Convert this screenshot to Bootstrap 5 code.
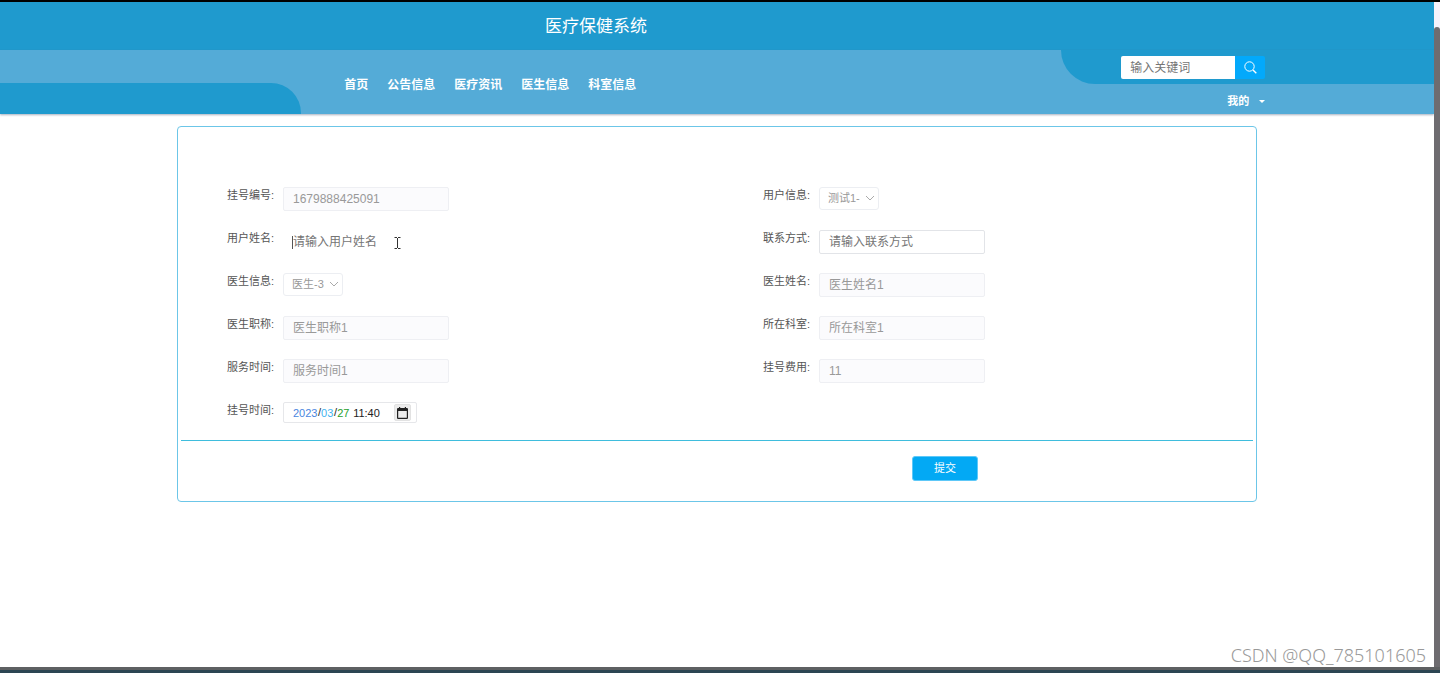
<!DOCTYPE html>
<html lang="zh-CN">
<head>
<meta charset="utf-8">
<meta name="viewport" content="width=device-width, initial-scale=1">
<title>医疗保健系统</title>
<link href="https://cdn.jsdelivr.net/npm/bootstrap@5.3.0/dist/css/bootstrap.min.css" rel="stylesheet">
<style>
  :root { --deep: #1f9ace; --light: #54abd7; --accent: #03a9f4; --line: #6cc6e8; }
  body { font: 12px/17px "Liberation Sans", "Noto Sans CJK SC", sans-serif; color: #555; background: #fff; border-top: 2px solid #000; }
  .site-title { background: var(--deep); height: 48px; padding-left: 38%; font-size: 17px; line-height: 50px; color: #fff; margin: 0; font-weight: 400; }
  .site-bar { background: var(--light); height: 64px; box-shadow: 0 1px 2px rgba(60,80,110,.45); }
  .curve-left { width: 21%; height: 31px; background: var(--deep); border-top-right-radius: 30px; }
  .main-menu { gap: 19px; padding: 6px 0 0 43px; }
  .main-menu a, .my-menu { color: #fff; font-weight: 700; text-decoration: none; }
  .site-side { width: 26%; }
  .curve-right { height: 34px; background: var(--deep); border-bottom-left-radius: 34px; padding: 6px 0 0 60px; }
  .search-box { width: 114px; height: 23px; border: 0; border-radius: 2px 0 0 2px; padding: 0 9px; color: #666; outline: 0; }
  .search-btn { width: 30px; height: 23px; border: 0; padding: 0; background: #03a9fb; border-radius: 0 2px 2px 0; }
  .my-menu { font-size: 11px; border: 0; background: none; padding: 0 0 0 166px; gap: 10px; height: 34px; }
  .my-menu::after { margin: 0; border-width: 3px; border-bottom: 0; }
  .form-panel { max-width: 1080px; margin: 12px auto 0; border: 1px solid var(--line); border-radius: 4px; padding: 60px 3px 20px; }
  .field-row { padding-left: 46px; height: 43px; }
  .field-row label { width: 56px; font-size: 11px; color: #555; }
  .field-box { width: 166px; height: 24px; border: 1px solid #e2e4e8; border-radius: 2px; padding: 0 9px; color: #666; background: #fff; outline: 0; }
  .field-box::placeholder, .search-box::placeholder { color: #757575; opacity: 1; }
  .field-box:disabled { background: #fbfbfd; border-color: #eeeff3; color: #999; }
  .cjk-value { padding-bottom: 3px; }
  .field-box.editing { border-color: transparent; }
  .pick { width: 60px; height: 23px; border: 1px solid #eceef2; border-radius: 3px; padding: 0 18px 0 8px; font-size: 11px; color: #999; opacity: 1; appearance: none; background: #fff; text-overflow: clip; }
  .pick-arrow { right: 4px; top: 7px; pointer-events: none; }
  .caret-bar { left: 9px; top: 6px; width: 1px; height: 13px; background: #555; }
  .beam { left: 110px; top: 6px; }
  .date-box { width: 134px; height: 21px; border: 1px solid #e6e7ea; border-radius: 2px; padding: 0 5px 0 9px; color: #222; font-size: 11px; }
  .date-box input { border: 0; padding: 0; background: none; height: 19px; outline: 0; }
  .w-year { width: 25px; color: #4a86e0; }
  .w-month { width: 13px; color: #42b4f0; }
  .w-day { width: 13px; color: #27a02c; }
  .w-time { width: 30px; margin-left: 3px; color: #222; }
  .date-btn { width: 17px; height: 17px; padding: 0; border: 1px solid #e2e2e2; border-radius: 2px; background: #ececec; }
  .panel-line { border-top: 1px solid #3fbddd; opacity: 1; margin: -5px 0 15px; }
  .submit-row { padding-left: 68.2%; }
  .submit-btn { width: 66px; height: 25px; padding: 0; border: 1px solid #5ec8f8; border-radius: 3px; background: var(--accent); color: #fff; font-size: 11px; }
  .scroll-track { width: 6px; background: #f6f2fb; padding-top: 25px; }
  .scroll-thumb { background: #6e6c70; border-radius: 3px 3px 0 0; }
  .frame-foot { border-top: 3px solid #5e6062; height: 6px; background: #2c4653; }
  .watermark { right: 14px; bottom: 7px; font: 300 18px/22px "Noto Sans", sans-serif; color: #999; }
</style>
</head>
<body class="d-flex flex-column min-vh-100 position-relative">
<div class="d-flex flex-grow-1">
  <div class="flex-grow-1">
    <header>
      <h1 class="site-title">医疗保健系统</h1>
      <div class="site-bar d-flex">
        <div class="curve-left align-self-end"></div>
        <nav class="main-menu d-flex align-items-center flex-grow-1">
          <a href="#">首页</a><a href="#">公告信息</a><a href="#">医疗资讯</a><a href="#">医生信息</a><a href="#">科室信息</a>
        </nav>
        <div class="site-side">
          <form class="curve-right d-flex">
            <input class="search-box" type="text" placeholder="输入关键词" aria-label="输入关键词">
            <button class="search-btn d-flex align-items-center justify-content-center" type="button" aria-label="搜索">
              <svg width="13" height="13" viewBox="0 0 13 13" fill="none" stroke="#fff"><circle cx="5.5" cy="5.5" r="4.7"/><path d="M9 9l3.3 3.3" stroke-width="1.4"/></svg>
            </button>
          </form>
          <button class="my-menu dropdown-toggle d-flex align-items-center" type="button">我的</button>
        </div>
      </div>
    </header>
    <main>
      <form class="form-panel">
        <div class="row g-0">
          <div class="col-6 field-row d-flex"><label for="f1">挂号编号:</label><input id="f1" class="field-box" type="text" value="1679888425091" disabled></div>
          <div class="col-6 field-row d-flex"><label for="f2">用户信息:</label>
            <div class="position-relative"><select id="f2" class="pick" disabled><option>测试1-</option></select><svg class="pick-arrow position-absolute" width="10" height="8" viewBox="0 0 10 8" fill="none" stroke="#aaa"><path d="M1 2l4 4 4-4"/></svg></div></div>
          <div class="col-6 field-row d-flex"><label for="f3">用户姓名:</label>
            <div class="position-relative"><input id="f3" class="field-box editing" type="text" placeholder="请输入用户姓名"><span class="caret-bar position-absolute"></span>
              <svg class="beam position-absolute" width="9" height="14" viewBox="0 0 9 14" fill="none" stroke="#333"><path d="M1.5 1.5H4M5 1.5h2.500M4.500 2v10M1.500 12.500H4M5 12.500h2.500"/></svg></div></div>
          <div class="col-6 field-row d-flex"><label for="f4">联系方式:</label><input id="f4" class="field-box" type="text" placeholder="请输入联系方式"></div>
          <div class="col-6 field-row d-flex"><label for="f5">医生信息:</label>
            <div class="position-relative"><select id="f5" class="pick" disabled><option>医生-3</option></select><svg class="pick-arrow position-absolute" width="10" height="8" viewBox="0 0 10 8" fill="none" stroke="#aaa"><path d="M1 2l4 4 4-4"/></svg></div></div>
          <div class="col-6 field-row d-flex"><label for="f6">医生姓名:</label><input id="f6" class="field-box cjk-value" type="text" value="医生姓名1" disabled></div>
          <div class="col-6 field-row d-flex"><label for="f7">医生职称:</label><input id="f7" class="field-box cjk-value" type="text" value="医生职称1" disabled></div>
          <div class="col-6 field-row d-flex"><label for="f8">所在科室:</label><input id="f8" class="field-box cjk-value" type="text" value="所在科室1" disabled></div>
          <div class="col-6 field-row d-flex"><label for="f9">服务时间:</label><input id="f9" class="field-box cjk-value" type="text" value="服务时间1" disabled></div>
          <div class="col-6 field-row d-flex"><label for="f10">挂号费用:</label><input id="f10" class="field-box" type="text" value="11" disabled></div>
          <div class="col-6 field-row d-flex"><label for="f11">挂号时间:</label>
            <div class="date-box d-flex align-items-center" role="group" aria-label="挂号时间">
              <input id="f11" class="w-year" type="text" value="2023" aria-label="年">/<input class="w-month" type="text" value="03" aria-label="月">/<input class="w-day" type="text" value="27" aria-label="日"><input class="w-time" type="text" value="11:40" aria-label="时间">
              <button class="date-btn d-flex align-items-center justify-content-center ms-auto" type="button" aria-label="选择日期">
                <svg width="11" height="12" viewBox="0 0 11 12"><path fill="#222" fill-rule="evenodd" d="M2 0h1.200v1h4.600V0H9v1h1.200l.8.800v9.400l-.8.800H.8l-.8-.8V1.800L.8 1H2zM1.200 4v6.800h8.600V4z"/></svg>
              </button>
            </div></div>
        </div>
        <hr class="panel-line">
        <div class="submit-row"><button class="submit-btn" type="button">提交</button></div>
      </form>
    </main>
  </div>
  <div class="scroll-track d-flex"><div class="scroll-thumb flex-fill"></div></div>
</div>
<div class="frame-foot"></div>
<div class="watermark position-absolute">CSDN @QQ_785101605</div>
<script src="https://cdn.jsdelivr.net/npm/bootstrap@5.3.0/dist/js/bootstrap.bundle.min.js"></script>
</body>
</html>
